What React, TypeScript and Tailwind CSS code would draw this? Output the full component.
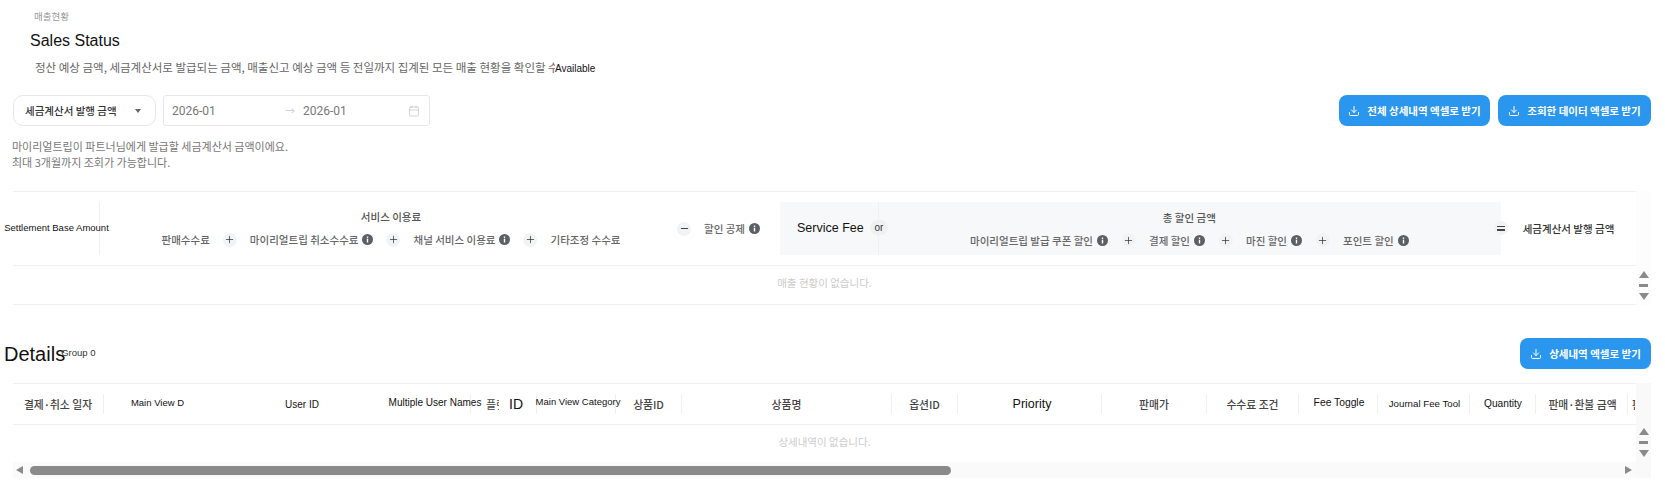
import { Calendar, Download, Minus, Plus } from "lucide-react";
import type { ReactNode } from "react";

const KR = "font-['Noto_Sans_CJK_KR','Noto_Sans',sans-serif]";
const LATIN = "font-['Liberation_Sans',Arial,sans-serif]";

type Column = {
  width: number;
  label: string;
  className?: string;
  latin?: boolean;
  separator?: boolean;
};

const COLUMNS: Column[] = [
  { width: 91, label: "결제·취소 일자", className: "text-[10.8px] font-medium", separator: true },
  { width: 106, label: "Main View D", latin: true, className: "text-[9.5px] pb-[2px] pl-[1px]" },
  { width: 184, label: "User ID", latin: true, className: "text-[10px]" },
  { width: 77, label: "Multiple User Names", latin: true, className: "text-[10px] pb-[3px] pl-[6px]", separator: true },
  { width: 28, label: "플랫폼", className: "text-[11px] justify-start pl-[15px] overflow-hidden" },
  { width: 38, label: "ID", latin: true, className: "text-[14px] justify-start pl-[10px]", separator: true },
  { width: 79, label: "Main View Category", latin: true, className: "text-[9.5px] pb-[4px] pl-[4px]", separator: true },
  { width: 66, label: "상품ID", className: "text-[10.8px] font-medium", separator: true },
  { width: 210, label: "상품명", className: "text-[10.8px] font-medium", separator: true },
  { width: 66, label: "옵션ID", className: "text-[10.8px] font-medium", separator: true },
  { width: 144, label: "Priority", latin: true, className: "text-[12.5px] pl-[5px]", separator: true },
  { width: 105, label: "판매가", className: "text-[10.8px] font-medium", separator: true },
  { width: 92, label: "수수료 조건", className: "text-[10.8px] font-medium", separator: true },
  { width: 79, label: "Fee Toggle", latin: true, className: "text-[10.3px] pb-[3px] pl-[2px]", separator: true },
  { width: 92, label: "Journal Fee Tool", latin: true, className: "text-[9.7px] pl-[2px]", separator: true },
  { width: 66, label: "Quantity", latin: true, className: "text-[10.2px] pl-[1px]", separator: true },
  { width: 92, label: "판매·환불 금액", className: "text-[10.8px] font-medium pl-[2px]", separator: true },
  { width: 7, label: "판매", className: "text-[10.8px] font-medium justify-start pl-[4px] overflow-hidden" },
];

function InfoIcon() {
  return (
    <svg width="11" height="11" viewBox="0 0 11 11" className="shrink-0">
      <circle cx="5.5" cy="5.5" r="5.5" fill="#5b5f66" />
      <rect x="4.8" y="4.7" width="1.4" height="3.8" fill="#fff" />
      <rect x="4.8" y="2.5" width="1.4" height="1.4" fill="#fff" />
    </svg>
  );
}

function OpCircle({ children }: { children: ReactNode }) {
  return (
    <span className="flex h-[14px] w-[14px] shrink-0 items-center justify-center rounded-full bg-[#f1f3f5] text-[#333]">
      {children}
    </span>
  );
}

function PlusCircle() {
  return (
    <OpCircle>
      <Plus size={11} strokeWidth={1.6} />
    </OpCircle>
  );
}

function FeeItem({ label, info }: { label: string; info?: boolean }) {
  return (
    <span className={`flex items-center gap-[4px] whitespace-nowrap text-[10.5px] font-medium text-[#666] ${KR}`}>
      {label}
      {info ? <InfoIcon /> : null}
    </span>
  );
}

function BlueButton({ label, width }: { label: string; width: number }) {
  return (
    <button
      type="button"
      style={{ width }}
      className={`flex h-[31px] items-center justify-center gap-[7px] rounded-[8px] bg-[#2b96ed] text-[10.5px] font-bold text-white ${KR}`}
    >
      <Download size={12} strokeWidth={2} />
      {label}
    </button>
  );
}

function ScrollMarks() {
  return (
    <div className="flex flex-col items-center gap-[6px]">
      <span className="h-0 w-0 border-x-[5px] border-b-[7px] border-x-transparent border-b-[#8a8a8a]" />
      <span className="h-[3px] w-[9px] bg-[#8a8a8a]" />
      <span className="h-0 w-0 border-x-[5px] border-t-[7px] border-x-transparent border-t-[#8a8a8a]" />
    </div>
  );
}

function SummaryHeader() {
  return (
    <div className="flex h-[75px] border-y border-[#f0f0f0] pt-[10px]">
      <div className="flex h-[53px] w-[87px] shrink-0 items-center justify-center border-r border-[#f0f0f0] pl-[1px]">
        <span className={`whitespace-nowrap text-[9.5px] text-[#111] ${LATIN}`}>Settlement Base Amount</span>
      </div>

      <div className="flex h-[53px] w-[680px] shrink-0 items-center pl-[62px]">
        <div className="flex w-[458px] shrink-0 flex-col items-center gap-[7px]">
          <span className={`text-[10.5px] font-medium text-[#555] ${KR}`}>서비스 이용료</span>
          <div className="flex items-center gap-[13px]">
            <FeeItem label="판매수수료" />
            <PlusCircle />
            <FeeItem label="마이리얼트립 취소수수료" info />
            <PlusCircle />
            <FeeItem label="채널 서비스 이용료" info />
            <PlusCircle />
            <FeeItem label="기타조정 수수료" />
          </div>
        </div>
        <div className="ml-[57px] flex items-center gap-[13px]">
          <OpCircle>
            <Minus size={11} strokeWidth={2} />
          </OpCircle>
          <FeeItem label="할인 공제" info />
        </div>
      </div>

      <div className="flex h-[53px] w-[98px] shrink-0 items-center bg-[#f7f8fa] pl-[17px]">
        <span className={`text-[12.5px] text-[#111] ${LATIN}`}>Service Fee</span>
      </div>

      <div className="relative flex h-[53px] w-[623px] shrink-0 items-center border-l border-[#f0f0f0] bg-[#f7f8fa] pl-[91px]">
        <span
          className={`absolute left-[-9px] top-[18px] flex h-[15px] w-[18px] items-center justify-center rounded-full bg-[#eef0f2] text-[10px] text-[#333] ${LATIN}`}
        >
          or
        </span>
        <div className="flex flex-col items-center gap-[7px] pt-[1px]">
          <span className={`text-[10.5px] font-medium text-[#555] ${KR}`}>총 할인 금액</span>
          <div className="flex items-center gap-[13.5px]">
            <FeeItem label="마이리얼트립 발급 쿠폰 할인" info />
            <PlusCircle />
            <FeeItem label="결제 할인" info />
            <PlusCircle />
            <FeeItem label="마진 할인" info />
            <PlusCircle />
            <FeeItem label="포인트 할인" info />
          </div>
        </div>
        <span className="absolute right-[-7px] top-[19px]">
          <OpCircle>
            <span className="flex flex-col gap-[2px]">
              <span className="h-[1.5px] w-[8px] bg-[#444]" />
              <span className="h-[1.5px] w-[8px] bg-[#444]" />
            </span>
          </OpCircle>
        </span>
      </div>

      <div className="flex h-[53px] flex-1 items-center justify-center">
        <span className={`whitespace-nowrap text-[10.5px] font-medium text-[#333] ${KR}`}>세금계산서 발행 금액</span>
      </div>
    </div>
  );
}

function DetailHeader() {
  return (
    <div className="flex h-[42px] items-center border-y border-[#f0f0f0]">
      {COLUMNS.map((column) => (
        <div
          key={column.label}
          style={{ width: column.width }}
          className={`relative flex h-[20px] shrink-0 items-center justify-center whitespace-nowrap ${column.separator ? "border-r border-[#f0f0f0]" : ""} ${column.latin ? `text-[#111] ${LATIN}` : `text-[#444] ${KR}`} ${column.className ?? ""}`}
        >
          {column.label}
        </div>
      ))}
    </div>
  );
}

export default function App() {
  return (
    <div className={`h-[500px] w-[1665px] overflow-hidden bg-white ${KR}`}>
      <div className="flex h-[32px] items-center pl-[34px] text-[9.5px] text-[#999]">매출현황</div>
      <h1 className={`mt-[1px] flex h-[16px] items-center pl-[30px] text-[16px] font-normal text-[#111] ${LATIN}`}>Sales Status</h1>
      <div className="mt-[10px] flex h-[18px] items-center pl-[35px]">
        <span className="w-[520px] overflow-hidden whitespace-nowrap text-[11.5px] text-[#666]">
          정산 예상 금액, 세금계산서로 발급되는 금액, 매출신고 예상 금액 등 전일까지 집계된 모든 매출 현황을 확인할 수
        </span>
        <span className={`pt-[1px] text-[10px] text-[#111] ${LATIN}`}>Available</span>
      </div>

      <div className="mt-[18px] flex h-[31px] justify-between pl-[13px] pr-[14px]">
        <div className="flex gap-[7px]">
          <div className="flex w-[143px] items-center justify-between rounded-[10px] border border-[#e5e7eb] pl-[11px] pr-[14px]">
            <span className="text-[10.5px] font-medium text-[#333]">세금계산서 발행 금액</span>
            <span className="h-0 w-0 border-x-[3.5px] border-t-[4px] border-x-transparent border-t-[#666]" />
          </div>
          <div className="flex w-[267px] items-center rounded-[3px] border border-[#e5e7eb] pl-[8px] pr-[9px] text-[12px] text-[#777]">
            <span className="w-[113px] font-['Roboto',sans-serif]">2026-01</span>
            <span className="w-[18px] text-[10px] text-[#ccc]">→</span>
            <span className="flex-1 font-['Roboto',sans-serif]">2026-01</span>
            <Calendar size={12} strokeWidth={1.2} className="text-[#bbb]" />
          </div>
        </div>
        <div className="flex gap-[8px]">
          <BlueButton label="전체 상세내역 엑셀로 받기" width={151} />
          <BlueButton label="조회한 데이터 엑셀로 받기" width={153} />
        </div>
      </div>

      <div className="mt-[12px] pl-[12px] text-[11px] leading-[16px] text-[#777]">
        <p>마이리얼트립이 파트너님에게 발급할 세금계산서 금액이에요.</p>
        <p>최대 3개월까지 조회가 가능합니다.</p>
      </div>

      <div className="mt-[21px] flex pl-[13px] pr-[14px]">
        <div className="w-[1623px] shrink-0">
          <SummaryHeader />
          <div className="flex h-[39px] items-center justify-center border-b border-[#f0f0f0] pb-[4px] text-[10.5px] text-[#ccc]">
            매출 현황이 없습니다.
          </div>
        </div>
        <div className="flex flex-1 flex-col items-center justify-end bg-[#fdfdfd] pb-[5px]">
          <ScrollMarks />
        </div>
      </div>

      <div className="mt-[33px] flex h-[31px] items-center justify-between pr-[14px]">
        <div className="flex items-start pl-[4px]">
          <h2 className={`text-[20px] leading-[24px] font-normal text-[#111] ${LATIN}`}>Details</h2>
          <span className={`ml-[-4px] text-[9.5px] leading-[22px] text-[#333] ${LATIN}`}>Group 0</span>
        </div>
        <BlueButton label="상세내역 엑셀로 받기" width={131} />
      </div>

      <div className="mt-[14px] flex pl-[13px] pr-[14px]">
        <div className="w-[1623px] shrink-0">
          <DetailHeader />
          <div className="flex h-[37px] items-center justify-center pb-[4px] text-[10.5px] text-[#ccc]">상세내역이 없습니다.</div>
          <div className="flex h-[16px] items-center bg-[#fafafa] pl-[3px] pr-[4px]">
            <span className="h-0 w-0 border-y-[4.5px] border-r-[7px] border-y-transparent border-r-[#8a8a8a]" />
            <span className="ml-[7px] h-[9px] w-[921px] rounded-full bg-[#8a8a8a]" />
            <span className="ml-auto h-0 w-0 border-y-[4.5px] border-l-[7px] border-y-transparent border-l-[#8a8a8a]" />
          </div>
        </div>
        <div className="flex flex-1 flex-col items-center bg-[#f9f9f9] pt-[45px]">
          <ScrollMarks />
        </div>
      </div>
    </div>
  );
}
